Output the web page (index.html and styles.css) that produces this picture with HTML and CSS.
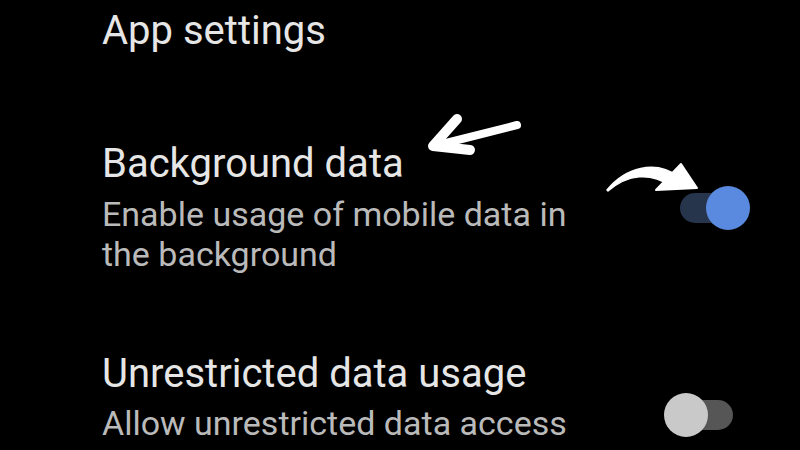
FILE: index.html
```html
<!DOCTYPE html>
<html>
<head>
<meta charset="utf-8">
<link rel="stylesheet" href="styles.css">
</head>
<body>
<div class="screen">
  <h1 class="section">App settings</h1>
  <div class="row row-bg">
    <div class="text">
      <div class="title">Background data</div>
      <div class="summary">Enable usage of mobile data in the background</div>
    </div>
    <div class="switch on"><span class="track"></span><span class="thumb"></span></div>
  </div>
  <div class="row row-un">
    <div class="text">
      <div class="title">Unrestricted data usage</div>
      <div class="summary">Allow unrestricted data access</div>
    </div>
    <div class="switch off"><span class="track"></span><span class="thumb"></span></div>
  </div>
  <svg class="arrow arrow-left" width="110" height="50" viewBox="0 0 110 50">
    <path d="M97 15 L18 35" stroke="#fff" stroke-width="8" stroke-linecap="round" fill="none"/>
    <path d="M37 9 L13 36 L50 40" stroke="#fff" stroke-width="10" stroke-linecap="round" stroke-linejoin="round" fill="none"/>
  </svg>
  <svg class="arrow arrow-curve" width="100" height="45" viewBox="0 0 100 45">
    <path d="M7 35 C25 13 55 4 79 22 L71 31 C50 17 28 19 8 36 Z" fill="#fff" stroke="#fff" stroke-width="1.5" stroke-linejoin="round"/>
    <path d="M81 9 L97 33 L56 35 Z" fill="#fff" stroke="#fff" stroke-width="2" stroke-linejoin="round"/>
  </svg>
</div>
</body>
</html>
```
FILE: styles.css
```css
html, body {
  margin: 0;
  padding: 0;
  background: #000;
}
.screen {
  position: relative;
  width: 800px;
  height: 450px;
  overflow: hidden;
  padding-left: 102px;
  box-sizing: border-box;
  font-family: Roboto, "Noto Sans", sans-serif;
  color: #e4e4e4;
}
.section {
  margin: 0;
  padding-top: 8px;
  font-weight: 400;
  font-size: 40px;
  line-height: 46px;
  color: #e6e6e6;
}
.row {
  display: flex;
  align-items: flex-start;
}
.row-bg { margin-top: 87px; }
.row-un { margin-top: 77px; }
.text { width: 490px; }
.title {
  font-size: 40px;
  line-height: 46px;
  color: #e6e6e6;
}
.summary {
  margin-top: 7px;
  font-size: 34px;
  line-height: 40px;
  color: #bababa;
}
.row-un .summary { margin-top: 6px; }
.switch {
  position: relative;
  width: 70px;
  height: 44px;
}
.track {
  position: absolute;
  top: 7px;
  height: 30px;
  border-radius: 15px;
}
.thumb {
  position: absolute;
  top: 0;
  width: 44px;
  height: 44px;
  border-radius: 50%;
}
.on { margin-left: 88px; margin-top: 45px; }
.on .track { left: 0; width: 58px; background: #26344c; }
.on .thumb { left: 26px; background: #5a8ae0; }
.off { margin-left: 72px; margin-top: 42px; }
.off .track { left: 4px; width: 65px; background: #565656; }
.off .thumb { left: 0; background: #c9c9c9; }
.arrow { position: absolute; }
.arrow-left { left: 420px; top: 110px; }
.arrow-curve { left: 600px; top: 155px; }
```
